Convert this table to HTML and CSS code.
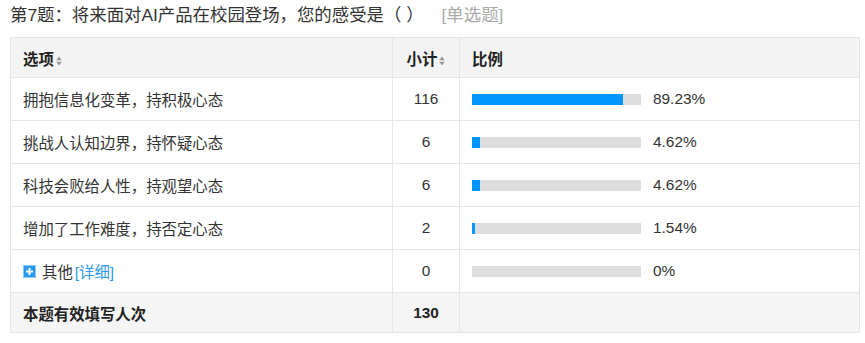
FILE: index.html
```html
<!DOCTYPE html>
<html lang="zh-CN">
<head>
<meta charset="utf-8">
<title>第7题</title>
<link rel="stylesheet" href="styles.css">
</head>
<body>
<div class="question">
  <div class="q-title">第7题：将来面对AI产品在校园登场，您的感受是（ ）<span class="q-type">[单选题]</span></div>
  <table class="result">
    <colgroup>
      <col class="c-opt">
      <col class="c-cnt">
      <col class="c-pct">
    </colgroup>
    <thead>
      <tr>
        <th class="opt">选项<svg class="sort" viewBox="0 0 6 10" width="6" height="10"><path d="M3 0.5 L5.8 4.2 H0.2Z M3 9.5 L5.8 5.8 H0.2Z" fill="#999"/></svg></th>
        <th class="cnt">小计<svg class="sort" viewBox="0 0 6 10" width="6" height="10"><path d="M3 0.5 L5.8 4.2 H0.2Z M3 9.5 L5.8 5.8 H0.2Z" fill="#999"/></svg></th>
        <th class="pct">比例</th>
      </tr>
    </thead>
    <tbody>
      <tr>
        <td class="opt">拥抱信息化变革，持积极心态</td>
        <td class="cnt">116</td>
        <td class="pct"><div class="bar-wrap"><div class="bar"><div class="fill" style="width:89.23%"></div></div><span class="val">89.23%</span></div></td>
      </tr>
      <tr>
        <td class="opt">挑战人认知边界，持怀疑心态</td>
        <td class="cnt">6</td>
        <td class="pct"><div class="bar-wrap"><div class="bar"><div class="fill" style="width:4.62%"></div></div><span class="val">4.62%</span></div></td>
      </tr>
      <tr>
        <td class="opt">科技会败给人性，持观望心态</td>
        <td class="cnt">6</td>
        <td class="pct"><div class="bar-wrap"><div class="bar"><div class="fill" style="width:4.62%"></div></div><span class="val">4.62%</span></div></td>
      </tr>
      <tr>
        <td class="opt">增加了工作难度，持否定心态</td>
        <td class="cnt">2</td>
        <td class="pct"><div class="bar-wrap"><div class="bar"><div class="fill" style="width:1.54%"></div></div><span class="val">1.54%</span></div></td>
      </tr>
      <tr>
        <td class="opt"><span class="other"><svg class="plus" viewBox="0 0 13 13" width="13" height="13"><rect x="0" y="0" width="13" height="13" fill="#2a9af0"/><rect x="0.5" y="0.5" width="12" height="12" fill="none" stroke="#8ccbf8" stroke-width="1"/><path d="M6.5 3 V10 M3 6.5 H10" stroke="#fff" stroke-width="2"/></svg>其他 <a class="detail" href="#">[详细]</a></span></td>
        <td class="cnt">0</td>
        <td class="pct"><div class="bar-wrap"><div class="bar"><div class="fill" style="width:0%"></div></div><span class="val">0%</span></div></td>
      </tr>
      <tr class="total">
        <td class="opt">本题有效填写人次</td>
        <td class="cnt">130</td>
        <td class="pct"></td>
      </tr>
    </tbody>
  </table>
</div>
</body>
</html>
```

FILE: styles.css
```css
html, body {
  margin: 0;
  padding: 0;
  background: #fff;
}
body {
  font-family: "Liberation Sans", "Noto Sans CJK SC", sans-serif;
  color: #333;
}
.question {
  padding: 5px 6px 0 10px;
}
.q-title {
  font-size: 17.4px;
  line-height: 20px;
  height: 20px;
  color: #333;
  white-space: nowrap;
}
.q-type {
  color: #aaa;
  margin-left: 18px;
}
.result {
  margin-top: 12px;
  border-collapse: collapse;
  table-layout: fixed;
  width: 849px;
  font-size: 15.4px;
  border: 1px solid #e3e3e3;
}
.c-opt { width: 382px; }
.c-cnt { width: 67px; }
.c-pct { width: 400px; }
.result th,
.result td {
  border: 1px solid #e6e6e6;
  padding: 0 0 0 12px;
  text-align: left;
  vertical-align: middle;
  white-space: nowrap;
}
.result thead th {
  background: #f4f4f4;
  font-weight: bold;
  height: 39px;
  color: #222;
}
.result tbody td {
  height: 42px;
}
.result th.cnt,
.result td.cnt {
  text-align: center;
  padding: 0;
}
.sort {
  display: inline-block;
  margin-left: 2px;
  vertical-align: -1px;
}
.result tr.total td {
  background: #f5f5f5;
  font-weight: bold;
  height: 39px;
  color: #222;
}
.bar-wrap {
  display: flex;
  align-items: center;
  gap: 12px;
}
.bar {
  width: 169px;
  height: 11px;
  background: #dedede;
  display: flex;
}
.fill {
  height: 100%;
  background: #0096ff;
}
.val {
  color: #333;
}
.other {
  display: inline-flex;
  align-items: center;
}
.plus {
  margin: 0 6px 0 0;
}
.detail {
  color: #2c9aef;
  text-decoration: none;
  margin-left: 2px;
}
```
